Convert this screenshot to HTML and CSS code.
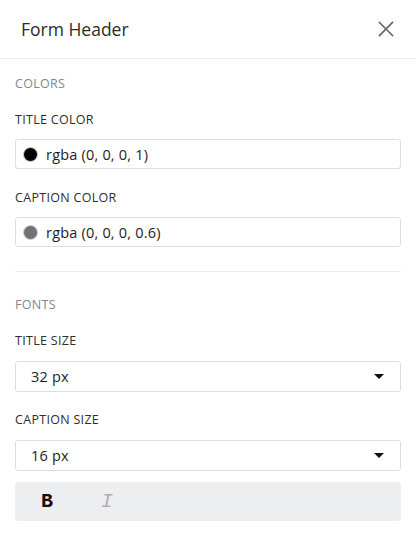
FILE: index.html
```html
<!DOCTYPE html>
<html>
<head>
<meta charset="utf-8">
<link rel="stylesheet" href="styles.css">
</head>
<body>
<div class="panel">
  <header class="head">
    <span class="head-title">Form Header</span>
    <svg class="close" width="16" height="16" viewBox="0 0 16 16"><path d="M1.5 1.5 L14.5 14.5 M14.5 1.5 L1.5 14.5" stroke="#5f6368" stroke-width="1.6" fill="none" stroke-linecap="square"/></svg>
  </header>
  <section class="sec">
    <div class="sec-label">COLORS</div>
    <div class="field-label">TITLE COLOR</div>
    <div class="input"><span class="swatch swatch-black"></span><span class="val">rgba (0, 0, 0, 1)</span></div>
    <div class="field-label">CAPTION COLOR</div>
    <div class="input"><span class="swatch swatch-gray"></span><span class="val">rgba (0, 0, 0, 0.6)</span></div>
  </section>
  <div class="divider"></div>
  <section class="sec sec2">
    <div class="sec-label">FONTS</div>
    <div class="field-label">TITLE SIZE</div>
    <div class="input select"><span class="val sel-val">32 px</span><span class="caret"></span></div>
    <div class="field-label">CAPTION SIZE</div>
    <div class="input select"><span class="val sel-val">16 px</span><span class="caret"></span></div>
    <div class="toolbar"><span class="tb-b">B</span><span class="tb-i">I</span></div>
  </section>
</div>
</body>
</html>
```
FILE: styles.css
```css
* { box-sizing: border-box; }
html, body { margin: 0; padding: 0; background: #fff; }
body { font-family: "Open Sans", "Liberation Sans", sans-serif; color: #222; }
.panel { width: 416px; }
.head {
  height: 59px;
  border-bottom: 1px solid #e9e9f0;
  display: flex;
  align-items: center;
  justify-content: space-between;
  padding: 0 22px 0 21px;
}
.head-title { font-size: 17.5px; color: #2b2b2b; letter-spacing: 0; }
.close { display: block; }
.sec { padding: 17px 15px 0 15px; }
.sec-label { font-size: 12.5px; line-height: 16px; color: #7d8890; height: 16px; letter-spacing: 0.3px; }
.field-label { font-size: 12.5px; line-height: 16px; height: 16px; color: #2e2e2e; margin-top: 20px; letter-spacing: 0.3px; }
.input {
  margin-top: 11px;
  height: 30px;
  border: 1px solid #dedede;
  border-radius: 3px;
  display: flex;
  align-items: center;
  padding-left: 7px;
}
.input + .field-label { margin-top: 21px; }
.swatch {
  width: 15px; height: 15px; border-radius: 50%;
  border: 1px solid #d4d4d4;
  margin-right: 8px;
  flex: none;
}
.swatch-black { background: #000; }
.swatch-gray { background: #727272; }
.val { font-size: 14.5px; color: #1e1e1e; letter-spacing: 0.2px; }
.divider { height: 1px; background: #ececf0; margin: 24px 15px 0 15px; }
.sec2 { padding-top: 25px; }
.select { justify-content: space-between; padding: 0 16px 0 15px; margin-top: 12px; height: 31px; }
.select + .field-label { margin-top: 20px; }
.caret {
  width: 0; height: 0;
  border-left: 5px solid transparent;
  border-right: 5px solid transparent;
  border-top: 5px solid #111;
}
.toolbar {
  margin-top: 11px;
  height: 39px;
  background: #eceef0;
  border-radius: 4px;
  display: flex;
  align-items: center;
  padding-left: 26px;
  gap: 48px;
}
.tb-b { font-family: "Liberation Mono", monospace; font-weight: bold; font-size: 20px; color: #111; }
.tb-i { font-family: "Liberation Mono", monospace; font-style: italic; font-size: 20px; color: #b0b0b0; }
```
